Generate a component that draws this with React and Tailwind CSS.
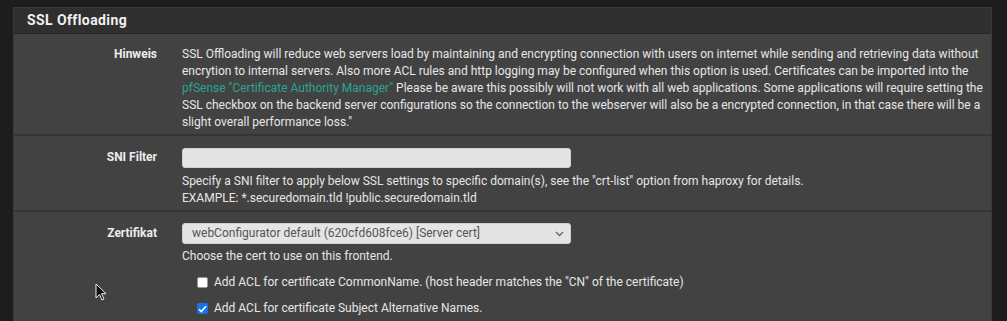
import React from 'react';

const Label = ({ children }) => (
  <div className="w-[143px] shrink-0 text-right font-bold text-[#ececec]">{children}</div>
);

export default function App() {
  return (
    <div
      className="relative w-[1007px] h-[321px] overflow-hidden bg-[#1d1d1d] pl-[13px] pr-[15px] pt-[7px] text-[12px] leading-[17px] text-[#e6e6e6]"
      style={{ fontFamily: 'Roboto, "Liberation Sans", sans-serif' }}
    >
      <div className="bg-[#424242] border border-[#3a3a3a]">
        <div className="h-[26px] bg-[#2f2f2f] border-b border-[#262626] px-[13px] flex items-center">
          <h2 className="text-[14px] font-bold tracking-[0.4px] text-[#f0f0f0]">SSL Offloading</h2>
        </div>

        <div className="flex gap-[25px] pt-[12px] pb-[3px] border-b-2 border-[#353535]">
          <Label>Hinweis</Label>
          <p className="pr-[6px]">
            SSL Offloading will reduce web servers load by maintaining and encrypting connection with users on internet while sending and retrieving data without encrytion to internal servers. Also more ACL rules and http logging may be configured when this option is used. Certificates can be imported into the{' '}
            <a className="text-[#2aa58f]">pfSense "Certificate Authority Manager"</a> Please be aware this possibly will not work with all web applications. Some applications will require setting the SSL checkbox on the backend server configurations so the connection to the webserver will also be a encrypted connection, in that case there will be a slight overall performance loss."
          </p>
        </div>

        <div className="flex gap-[25px] pt-[12px] pb-[3px] border-b-2 border-[#353535]">
          <div className="pt-[1px]"><Label>SNI Filter</Label></div>
          <div>
            <div className="w-[389px] h-[20px] rounded-[3px] bg-[#e4e4e4] border border-[#cfcfcf]" />
            <p className="mt-[5px]">Specify a SNI filter to apply below SSL settings to specific domain(s), see the "crt-list" option from haproxy for details.</p>
            <p>EXAMPLE: *.securedomain.tld !public.securedomain.tld</p>
          </div>
        </div>

        <div className="flex gap-[25px] pt-[11px] pb-[10px]">
          <div className="pt-[2px]"><Label>Zertifikat</Label></div>
          <div>
            <div className="w-[389px] h-[21px] rounded-[3px] bg-[#e4e4e4] border border-[#cfcfcf] flex items-center justify-between pl-[9px] pr-[6px] text-[#555]">
              <span>webConfigurator default (620cfd608fce6) [Server cert]</span>
              <svg width="9" height="6" viewBox="0 0 9 6" fill="none" stroke="#666" strokeWidth="1.3">
                <path d="M1 1l3.5 3.5L8 1" />
              </svg>
            </div>
            <p className="mt-[4px]">Choose the cert to use on this frontend.</p>
            <div className="mt-[9px] pl-[15px] flex flex-col gap-[9px]">
              <div className="flex items-center gap-[6px]">
                <span className="w-[11px] h-[11px] rounded-[2px] bg-white border border-[#999]" />
                <span>Add ACL for certificate CommonName. (host header matches the "CN" of the certificate)</span>
              </div>
              <div className="flex items-center gap-[6px]">
                <span className="w-[11px] h-[11px] rounded-[2px] bg-[#1a73e8] flex items-center justify-center">
                  <svg width="9" height="8" viewBox="0 0 9 8" fill="none" stroke="white" strokeWidth="1.6">
                    <path d="M1 4.2l2.3 2.3L8 1.2" />
                  </svg>
                </span>
                <span>Add ACL for certificate Subject Alternative Names.</span>
              </div>
            </div>
          </div>
        </div>
      </div>

      <svg className="absolute left-[95px] top-[283px]" width="12" height="18" viewBox="0 0 12 18">
        <path d="M1 1v14l3.5-3.5 2.5 5.5 2-1-2.5-5.3H11z" fill="#111" stroke="#eee" strokeWidth="1" />
      </svg>
    </div>
  );
}
